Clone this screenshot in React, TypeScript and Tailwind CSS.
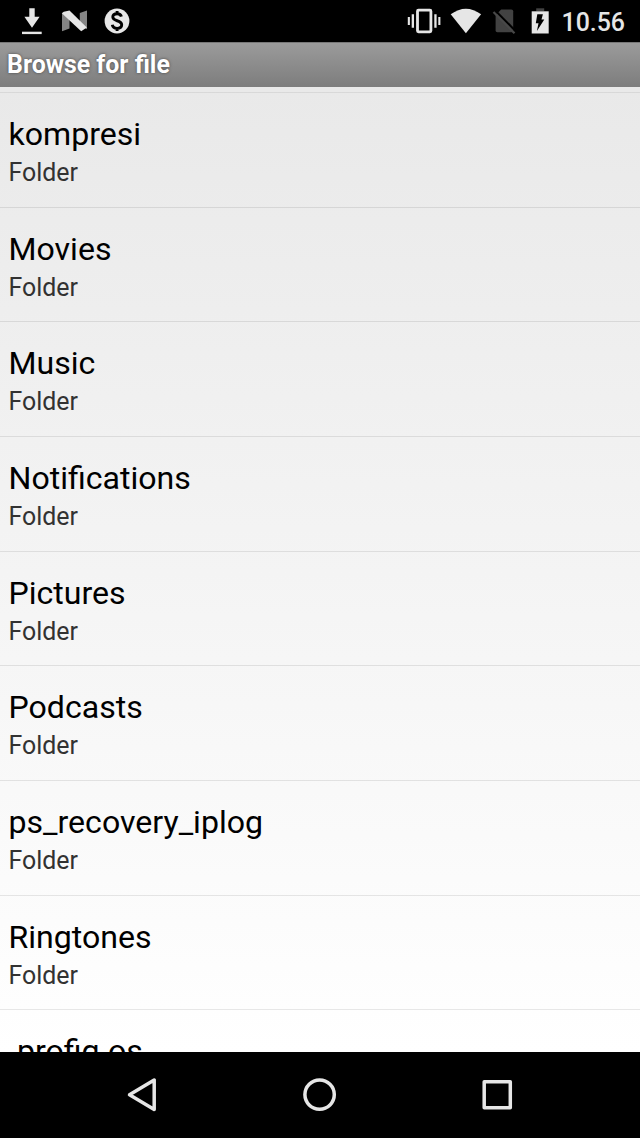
const folders = [
  'kompresi',
  'Movies',
  'Music',
  'Notifications',
  'Pictures',
  'Podcasts',
  'ps_recovery_iplog',
  'Ringtones',
];

function NotificationIcons() {
  return (
    <svg width="140" height="42" viewBox="0 0 140 42" className="shrink-0" fill="#e6e6e6">
      <path d="M29.3 8.2h5.4v8.6h4.9L32 27.8l-7.6-11h4.9z" />
      <path d="M22 31.7h19.7v2.4H22z" />
      <path d="M62 13l7.5 5.5v10L62 31.3zM79.8 13l7.2-2.5v18.8l-7.2-4z" fill="#858585" />
      <path d="M61.8 13.3l2-1.6 5.7-1.3L86.8 27.5l-5.6 3.8z" />
      <circle cx="117" cy="21" r="12.4" />
      <path d="M121.4 16.7c-.5-2-2-3-4.3-3-2.6 0-4.3 1.3-4.3 3.4 0 4.7 8.9 2.6 8.9 7.7 0 2.2-1.8 3.6-4.6 3.6-2.6 0-4.4-1.2-4.8-3.6M117.1 11v3M117.1 28v3" fill="none" stroke="#000" strokeWidth="2.9" />
    </svg>
  );
}

function SystemIcons() {
  return (
    <svg width="150" height="42" viewBox="404.3 0 150 42" className="shrink-0" fill="#e6e6e6">
      <rect x="417.8" y="10.2" width="13.4" height="21.6" rx="1" fill="none" stroke="#e6e6e6" strokeWidth="2.8" />
      <path d="M408.1 17h2.1v8h-2.1zM412 14.3h2.3v13.4H412zM434.6 14.3h2.3v13.4h-2.3zM438.6 17h2.1v8h-2.1z" />
      <path d="M451 14.3Q466.2 3 481.4 14.3L466.2 33.3z" />
      <path d="M501.5 9.5h10.2q1.8 0 1.8 1.8v19.2q0 1.8-1.8 1.8h-14q-1.8 0-1.8-1.8V15z" fill="#424242" />
      <path d="M495.7 10.7L516.7 31.9" fill="none" stroke="#000" strokeWidth="2.2" />
      <path d="M493.8 12L514.8 33.2" fill="none" stroke="#484848" strokeWidth="2.2" />
      <path d="M536.5 8.3h8v3h-8z" fill="#424242" />
      <path d="M532 11.3h17v22.2h-17z" />
      <path d="M537.6 14.3h5.6l-1.4 5.3h2.8L537.2 31l1.6-7.7h-2.7z" fill="#000" />
    </svg>
  );
}

export default function App() {
  return (
    <div className="flex h-[1138px] w-[640px] flex-col overflow-hidden bg-black font-[Roboto,sans-serif]">
      <header className="flex h-[42px] shrink-0 items-center justify-between pr-[15px] text-[#e6e6e6]">
        <NotificationIcons />
        <div className="flex items-center gap-[7px]">
          <SystemIcons />
          <span className="pt-[3px] text-[24.9px] leading-[30px] font-medium">10.56</span>
        </div>
      </header>
      <h1 className="flex h-[45px] shrink-0 items-center border-t border-[#777] bg-linear-to-b from-[#9b9b9b] to-[#7d7d7d] pl-[7px] text-[24.9px] font-bold text-white [text-shadow:0_0_3px_#444]">
        Browse for file
      </h1>
      <main className="flex min-h-0 flex-1 flex-col overflow-hidden bg-linear-to-b from-[#e9e9e9] to-white">
        <div className="h-[6px] shrink-0 border-b border-black/7" />
        <ul>
          {folders.map((name) => (
            <li key={name} className="flex h-[114.67px] flex-col border-b border-black/9 pt-[22px] pl-[8.5px]">
              <span className="text-[32.1px] leading-[38px] text-black">{name}</span>
              <span className="pt-[1px] text-[24.9px] leading-[38px] text-[#323232]">Folder</span>
            </li>
          ))}
          <li className="pt-[22px] pl-[8.5px] text-[32.1px] leading-[38px] text-black">.profig.os</li>
        </ul>
      </main>
      <nav className="flex h-[86px] shrink-0 items-center justify-center bg-black">
        <svg width="640" height="86" viewBox="0 1052 640 86" fill="none" stroke="#e6e6e6" strokeWidth="3.5" strokeLinejoin="round">
          <path d="M154.2 1080v29.4L129.5 1094.8z" />
          <circle cx="319.6" cy="1094.6" r="14.7" />
          <path d="M484.2 1081.7h26.1v26h-26.1z" />
        </svg>
      </nav>
    </div>
  );
}
